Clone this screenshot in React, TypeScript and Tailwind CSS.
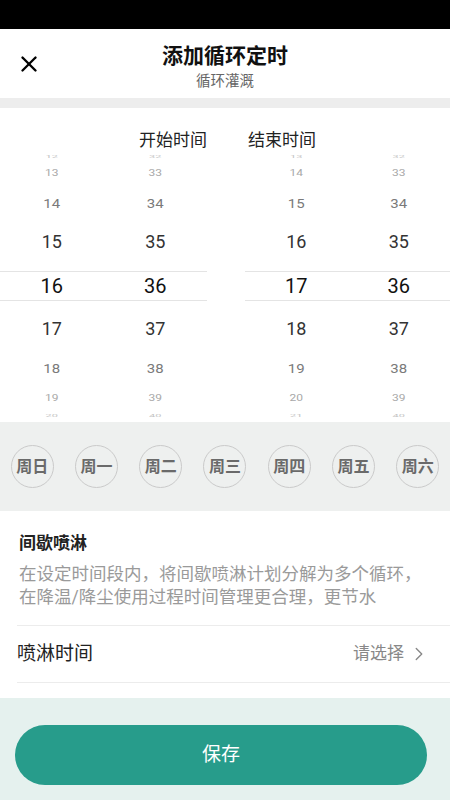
import { X, ChevronRight } from 'lucide-react';

type Cell = { v: string; h: string; cls: string };

// wheel rows, top to bottom: heights and text styles fake the 3D drum
const rowStyles = [
  { h: 'h-[12px]', cls: 'text-[11px] text-[#c4c4c4] scale-y-[0.35]' },
  { h: 'h-[22px]', cls: 'text-[12px] text-[#a8a8a8] scale-y-[0.7]' },
  { h: 'h-[38px]', cls: 'text-[15px] text-[#7a7a7a] scale-y-[0.9]' },
  { h: 'h-[40px]', cls: 'text-[18px] text-[#333]' },
  { h: 'h-[30px]', cls: 'text-[20px] text-[#111]' },
  { h: 'h-[40px]', cls: 'text-[18px] text-[#333]' },
  { h: 'h-[38px]', cls: 'text-[15px] text-[#7a7a7a] scale-y-[0.9]' },
  { h: 'h-[22px]', cls: 'text-[12px] text-[#a8a8a8] scale-y-[0.7]' },
  { h: 'h-[12px]', cls: 'text-[11px] text-[#c4c4c4] scale-y-[0.35]' },
];

function column(start: number): Cell[] {
  return rowStyles.map((s, i) => ({ v: String(start + i), h: s.h, cls: s.cls }));
}

function Wheel({ hours, minutes }: { hours: number; minutes: number }) {
  const cols = [column(hours), column(minutes)];
  return (
    <div className="relative flex h-[271px]">
      <div className="absolute left-0 right-0 top-[121px] h-[30px] border-y border-[#e4e4e4]" />
      {cols.map((col, ci) => (
        <div key={ci} className="flex-1 flex flex-col items-center">
          {col.map((c, i) => (
            <div
              key={c.v}
              className={`${c.h} w-full flex items-center justify-center leading-none ${
                i === 3 ? 'mb-[9px]' : ''
              } ${i === 5 ? 'mt-[8px]' : ''}`}
            >
              <span className={`inline-block ${c.cls}`}>{c.v}</span>
            </div>
          ))}
        </div>
      ))}
    </div>
  );
}

const days = ['周日', '周一', '周二', '周三', '周四', '周五', '周六'];

export default function App() {
  return (
    <div
      className="w-[450px] h-[800px] flex flex-col bg-white overflow-hidden"
      style={{ fontFamily: 'Roboto, "Noto Sans CJK SC", sans-serif' }}
    >
      <div className="h-[29px] bg-black" />

      <div className="relative h-[69px] flex flex-col items-center pt-[16px]">
        <button className="absolute left-[16px] top-[22px] text-black">
          <X size={26} strokeWidth={2.2} />
        </button>
        <h1 className="text-[21px] leading-[22px] font-bold text-[#111]">添加循环定时</h1>
        <p className="mt-[6px] text-[14.5px] leading-[18px] text-[#666]">循环灌溉</p>
      </div>

      <div className="h-[10px] bg-[#ededed]" />

      <div className="pt-[23px] h-[314px]">
        <div className="flex h-[19px] text-[17px] leading-[19px] text-[#222]">
          <div className="w-[207px] text-right">开始时间</div>
          <div className="w-[41px]" />
          <div>结束时间</div>
        </div>
        <div className="flex">
          <div className="w-[207px]">
            <Wheel hours={12} minutes={32} />
          </div>
          <div className="w-[38px]" />
          <div className="w-[205px]">
            <Wheel hours={13} minutes={32} />
          </div>
        </div>
      </div>

      <div className="h-[89px] bg-[#eef0ef] flex items-center justify-around">
        {days.map((d) => (
          <div
            key={d}
            className="w-[43px] h-[43px] rounded-full border border-[#cacaca] flex items-center justify-center text-[16px] font-bold text-[#6a6a6a]"
          >
            {d}
          </div>
        ))}
      </div>

      <div className="h-[187px] pt-[20px]">
        <h2 className="pl-[19px] text-[17px] leading-[24px] font-bold text-[#222]">间歇喷淋</h2>
        <p className="mt-[8px] pl-[19px] text-[17.5px] leading-[23px] text-[#9a9a9a]">
          在设定时间段内，将间歇喷淋计划分解为多个循环，
          <br />
          在降温/降尘使用过程时间管理更合理，更节水
        </p>
        <div className="mt-[16px] ml-[17px] border-t border-[#ececec]" />
        <div className="ml-[17px] h-[57px] flex items-center justify-between pr-[20px] border-b border-[#ececec]">
          <span className="text-[19px] text-[#222]">喷淋时间</span>
          <span className="flex items-center gap-[4px] text-[17px] text-[#888]">
            请选择
            <ChevronRight size={22} strokeWidth={1.5} />
          </span>
        </div>
      </div>

      <div className="flex-1 bg-[#e5f1ee] pt-[27px]">
        <button className="ml-[15px] w-[412px] h-[60px] rounded-full bg-[#279c8b] text-white text-[19px]">
          保存
        </button>
      </div>
    </div>
  );
}
